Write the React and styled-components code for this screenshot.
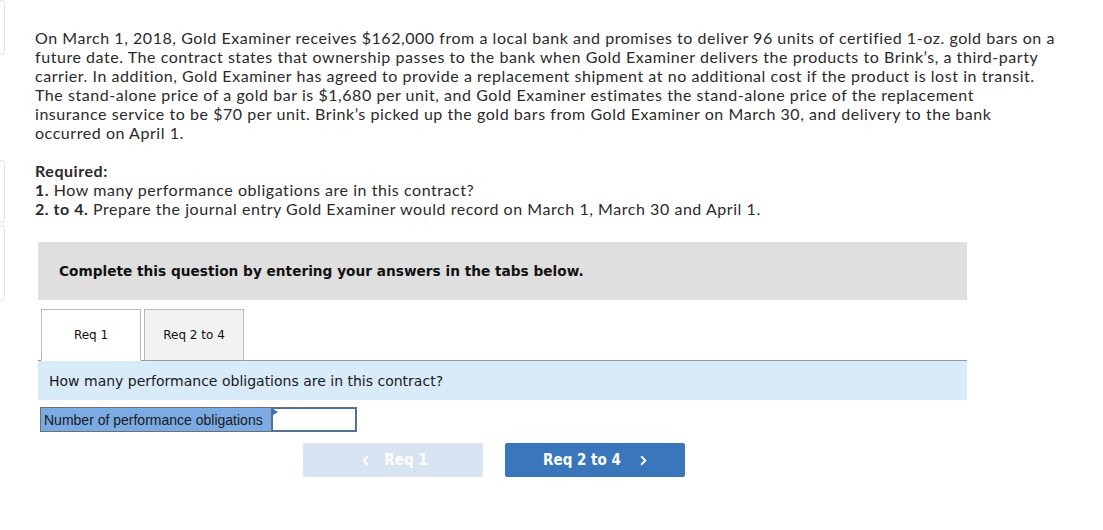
import React, { useState } from 'react';
import styled, { createGlobalStyle } from 'styled-components';
import { ChevronLeft, ChevronRight } from 'lucide-react';

const GlobalStyle = createGlobalStyle`
  html, body {
    margin: 0;
    padding: 0;
    background: #ffffff;
  }
  * {
    box-sizing: border-box;
  }
`;

const Page = styled.div`
  display: flex;
  width: 1103px;
  min-height: 530px;
  background: #fff;
`;

const Rail = styled.div`
  width: 5px;
  flex-shrink: 0;
  display: flex;
  flex-direction: column;
`;

const RailBox = styled.div`
  height: ${({ h }) => h}px;
  margin-top: ${({ mt }) => mt || 0}px;
  border: 1px solid #e6e6e6;
  border-left: none;
  border-radius: 0 4px 4px 0;
`;

const Main = styled.div`
  flex: 1;
  padding: 28px 0 0 30px;
`;

const Problem = styled.p`
  margin: 0;
  width: 1060px;
  font-family: 'Lato', 'Liberation Sans', sans-serif;
  font-size: 16px;
  letter-spacing: 0.55px;
  line-height: 19px;
  color: #2a2a2a;
`;

// the source wraps at fixed points; keep each line whole
const Line = styled.span`
  display: block;
  white-space: nowrap;
`;

const Required = styled.div`
  margin-top: 19px;
  font-family: 'Lato', 'Liberation Sans', sans-serif;
  font-size: 16px;
  letter-spacing: 0.55px;
  line-height: 19px;
  color: #2a2a2a;

  b {
    font-weight: 700;
  }
`;

const Panel = styled.div`
  margin: 24px 0 0 3px;
  width: 929px;
`;

const Banner = styled.div`
  height: 58px;
  display: flex;
  align-items: center;
  padding-left: 21px;
  background: #dfdfdf;
  font-family: 'DejaVu Sans', Verdana, sans-serif;
  font-weight: bold;
  font-size: 13.7px;
  color: #111;
`;

const TabBar = styled.div`
  display: flex;
  gap: 3px;
  margin-top: 9px;
  padding-left: 3px;
  border-bottom: 1px solid #9a9a9a;
`;

const Tab = styled.button`
  width: 100px;
  height: 52px;
  margin-bottom: -1px;
  border: 1px solid #b8b8b8;
  border-bottom: ${({ active }) => (active ? '1px solid #fff' : '1px solid #9a9a9a')};
  background: ${({ active }) => (active ? '#ffffff' : '#f2f2f2')};
  font-family: 'DejaVu Sans', Verdana, sans-serif;
  font-size: 12px;
  color: #111;
  cursor: pointer;
  padding: 0;
`;

const Question = styled.div`
  height: 39px;
  display: flex;
  align-items: center;
  padding-left: 11px;
  background: #d9ebf9;
  font-family: 'DejaVu Sans', Verdana, sans-serif;
  font-size: 14px;
  color: #1a1a1a;
`;

const AnswerRow = styled.div`
  display: flex;
  margin: 7px 0 0 2px;
  height: 25px;
`;

const Label = styled.div`
  width: 231px;
  display: flex;
  align-items: center;
  padding-left: 3px;
  background: #7aabe3;
  border: 1px solid #6f6f6f;
  border-right: none;
  font-family: 'Liberation Sans', Arial, sans-serif;
  font-size: 14px;
  color: #1a1a1a;
`;

const InputWrap = styled.div`
  position: relative;
  width: 86px;
  border: 1px solid #6f6f6f;
  box-shadow: inset 0 0 0 1px #3d6fb3;
  background: #fff;
`;

const Marker = styled.span`
  position: absolute;
  left: 1px;
  top: 1px;
  width: 0;
  height: 0;
  border-top: 3px solid transparent;
  border-bottom: 3px solid transparent;
  border-left: 5px solid #3d6fb3;
`;

const Field = styled.input`
  width: 100%;
  height: 100%;
  border: none;
  outline: none;
  background: transparent;
  padding: 0 4px;
  font-family: 'Liberation Sans', Arial, sans-serif;
  font-size: 14px;
`;

const NavRow = styled.div`
  display: flex;
  justify-content: center;
  gap: 22px;
  margin-top: 11px;
  padding-right: 17px;
`;

const NavButton = styled.button`
  width: 180px;
  height: 34px;
  display: flex;
  align-items: center;
  justify-content: center;
  gap: ${({ prev }) => (prev ? 11 : 15)}px;
  border: none;
  border-radius: 2px;
  background: ${({ disabled }) => (disabled ? '#d8e4f2' : '#3a76bb')};
  color: #fff;
  font-family: 'DejaVu Sans Condensed', 'DejaVu Sans', Tahoma, sans-serif;
  font-weight: bold;
  font-size: 15px;
  cursor: ${({ disabled }) => (disabled ? 'default' : 'pointer')};
  padding: 0 0 0 ${({ prev }) => (prev ? 0 : 4)}px;
`;

const problemLines = [
  'On March 1, 2018, Gold Examiner receives $162,000 from a local bank and promises to deliver 96 units of certified 1-oz. gold bars on a',
  'future date. The contract states that ownership passes to the bank when Gold Examiner delivers the products to Brink’s, a third-party',
  'carrier. In addition, Gold Examiner has agreed to provide a replacement shipment at no additional cost if the product is lost in transit.',
  'The stand-alone price of a gold bar is $1,680 per unit, and Gold Examiner estimates the stand-alone price of the replacement',
  'insurance service to be $70 per unit. Brink’s picked up the gold bars from Gold Examiner on March 30, and delivery to the bank',
  'occurred on April 1.',
];

export default function App() {
  const [tab, setTab] = useState(1);
  const [value, setValue] = useState('');

  return (
    <>
      <GlobalStyle />
      <Page>
        <Rail>
          <RailBox h={55} />
          <RailBox h={63} mt={105} />
          <RailBox h={76} mt={2} />
        </Rail>
        <Main>
          <Problem>
            {problemLines.map((line, i) => (
              <Line key={i}>{line}</Line>
            ))}
          </Problem>
          <Required>
            <b>Required:</b>
            <br />
            <b>1.</b> How many performance obligations are in this contract?
            <br />
            <b>2. to 4.</b> Prepare the journal entry Gold Examiner would record on March 1, March 30 and April 1.
          </Required>
          <Panel>
            <Banner>Complete this question by entering your answers in the tabs below.</Banner>
            <TabBar>
              <Tab active={tab === 1} onClick={() => setTab(1)}>Req 1</Tab>
              <Tab active={tab === 2} onClick={() => setTab(2)}>Req 2 to 4</Tab>
            </TabBar>
            <Question>How many performance obligations are in this contract?</Question>
            <AnswerRow>
              <Label>Number of performance obligations</Label>
              <InputWrap>
                <Marker />
                <Field value={value} onChange={(e) => setValue(e.target.value)} />
              </InputWrap>
            </AnswerRow>
            <NavRow>
              <NavButton prev disabled>
                <ChevronLeft size={15} strokeWidth={3} />
                <span>Req 1</span>
              </NavButton>
              <NavButton onClick={() => setTab(2)}>
                <span>Req 2 to 4</span>
                <ChevronRight size={15} strokeWidth={3} />
              </NavButton>
            </NavRow>
          </Panel>
        </Main>
      </Page>
    </>
  );
}
